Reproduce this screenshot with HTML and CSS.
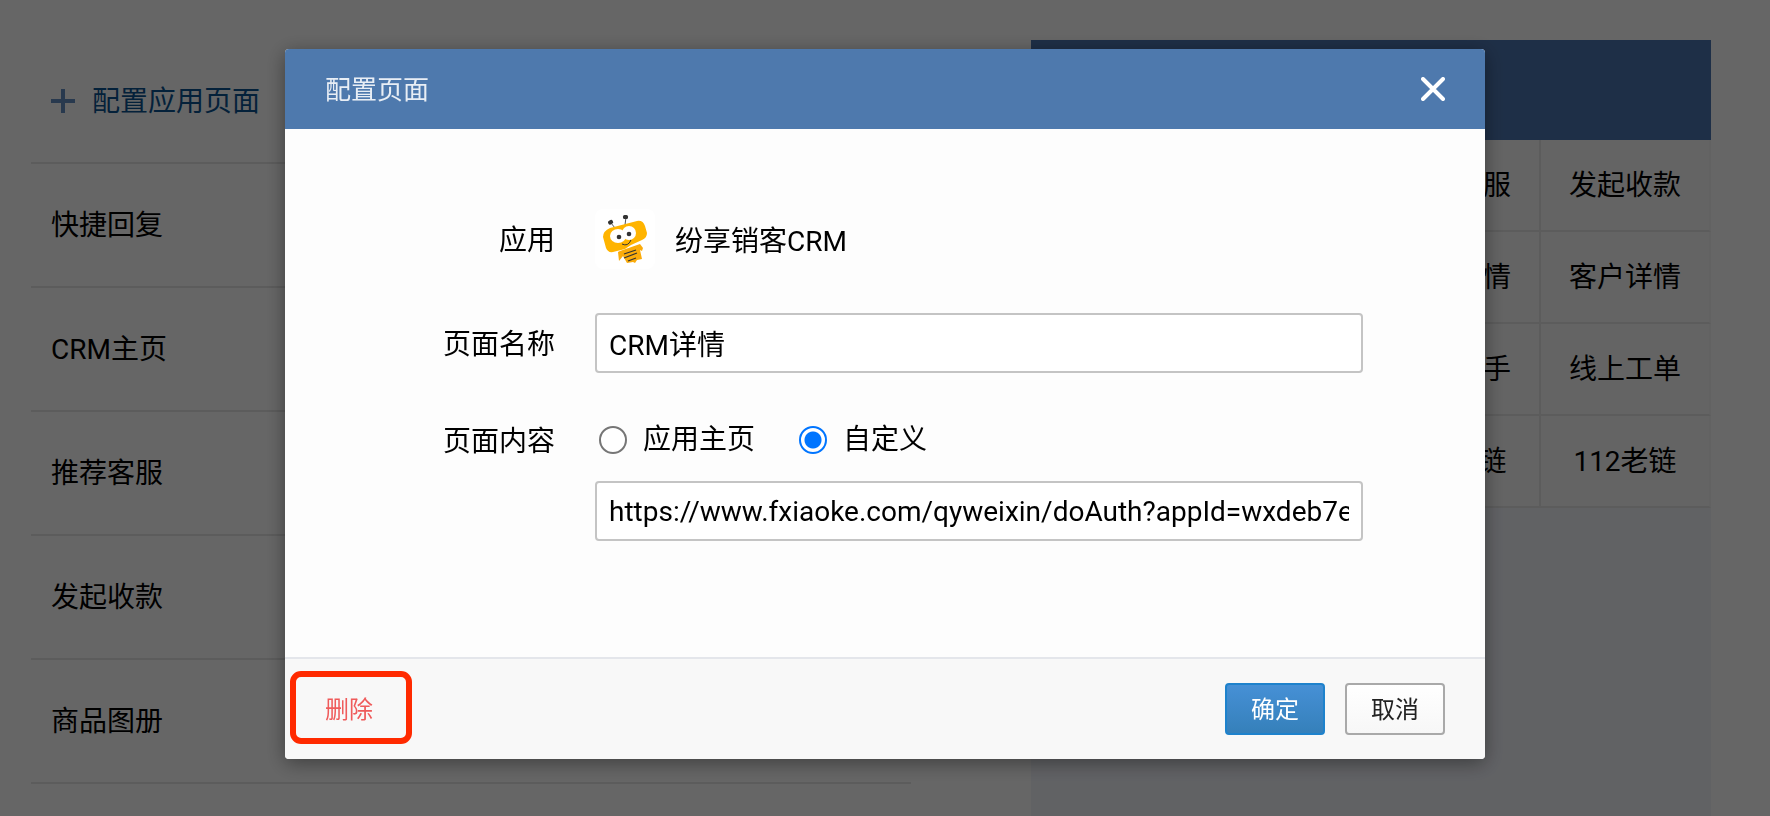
FILE: index.html
```html
<!DOCTYPE html>
<html lang="zh-CN">
<head>
  <meta charset="UTF-8" />
  <meta name="viewport" content="width=device-width, initial-scale=1.0" />
  <title>配置页面</title>
  <link rel="stylesheet" href="styles.css">
</head>
<body>

  <div class="page">
    <ul class="page-list">
      <li>
        <a href="#" class="add-link">
          <svg class="plus" viewBox="0 0 24 24"><path d="M12 0v24M0 12h24" stroke="currentColor" stroke-width="4" /></svg>
          <span>配置应用页面</span>
        </a>
      </li>
      <li><a href="#"><span>快捷回复</span></a></li>
      <li><a href="#"><span>CRM主页</span></a></li>
      <li><a href="#"><span>推荐客服</span></a></li>
      <li><a href="#"><span>发起收款</span></a></li>
      <li><a href="#"><span>商品图册</span></a></li>
    </ul>

    <div class="preview">
      <div class="preview-header"></div>
      <!-- 4 x 4 shortcuts -->
      <div class="preview-grid">
        <div class="cell"></div>
        <div class="cell"></div>
        <div class="cell">推荐客服</div>
        <div class="cell">发起收款</div>
        <div class="cell"></div>
        <div class="cell"></div>
        <div class="cell">商品详情</div>
        <div class="cell">客户详情</div>
        <div class="cell"></div>
        <div class="cell"></div>
        <div class="cell">销售助手</div>
        <div class="cell">线上工单</div>
        <div class="cell"></div>
        <div class="cell"></div>
        <div class="cell">112新链</div>
        <div class="cell">112老链</div>
      </div>
    </div>
  </div>

  <div class="overlay">
    <form class="dialog" role="dialog" aria-labelledby="dialog-title">
      <div class="dialog-header">
        <h1 id="dialog-title">配置页面</h1>
        <button type="button" class="close" aria-label="关闭">
          <svg viewBox="0 0 24 24"><path d="M2 2l20 20M22 2L2 22" stroke="#fff" stroke-width="4" stroke-linecap="round" /></svg>
        </button>
      </div>

      <div class="dialog-body">
        <span class="label">应用</span>
        <div class="app">
          <svg class="app-icon" viewBox="0 0 60 60">
            <rect width="60" height="60" rx="8" fill="#fff" />
            <!-- antennae -->
            <path d="M16 14l4 5M31 8l-1 8" stroke="#555" stroke-width="1" />
            <rect x="13" y="11" width="5" height="4" rx="1.5" transform="rotate(-30 16 13)" fill="#333" />
            <rect x="28" y="6" width="5" height="4" rx="1.5" fill="#333" />
            <!-- body and wings -->
            <path d="M25 42l20-7 3 4-1 3-2-1 2 9-5 1-2 3-2-1-6 1-4-7-4 5-1-9z" fill="#fbac0b" />
            <path d="M29 45l12-4M29 49l13-5M33 52l8-3" stroke="#333" stroke-width="1.2" />
            <!-- head -->
            <path d="M15 19l27-7q6-1 8 5l2 7q0 5-5 7l-11 5-6 4-12 3q-5 1-7-4l-3-11q0-6 7-9z" fill="#ffb400" />
            <ellipse cx="23" cy="27" rx="8" ry="7" fill="#fff" />
            <ellipse cx="34" cy="24" rx="7" ry="7" fill="#fff" />
            <circle cx="24" cy="28" r="2.3" fill="#333" />
            <circle cx="34" cy="25" r="2.3" fill="#333" />
            <path d="M27 35q6 3 9-4" stroke="#333" stroke-width="1" fill="none" />
          </svg>
          <span>纷享销客CRM</span>
        </div>

        <label class="label" for="page-name">页面名称</label>
        <input type="text" class="text-input" id="page-name" value="CRM详情">

        <span class="label label-content" id="content-label">页面内容</span>
        <div class="content-field" role="radiogroup" aria-labelledby="content-label">
          <div class="radios">
            <label><input type="radio" name="content" value="home">应用主页</label>
            <label><input type="radio" name="content" value="custom" checked>自定义</label>
          </div>
          <input type="text" class="text-input" aria-label="页面地址" value="https://www.fxiaoke.com/qyweixin/doAuth?appId=wxdeb7e2c">
        </div>
      </div>

      <div class="dialog-footer">
        <button type="button" class="delete">删除</button>
        <button type="submit" class="btn btn-primary">确定</button>
        <button type="button" class="btn">取消</button>
      </div>
    </form>
  </div>

</body>
</html>
```

FILE: styles.css
```css
* {
  box-sizing: border-box;
}

body {
  margin: 0;
  overflow: hidden;
  font-family: Roboto, "Noto Sans CJK SC", sans-serif;
  font-size: 28px;
  line-height: 40px;
  color: #000;
  background-color: #fff;
}

button,
input {
  font-family: inherit;
  font-size: inherit;
  color: inherit;
}

/* page behind the dialog */
.page {
  display: flex;
  gap: 120px;
  height: 100vh;
  padding: 40px 59px 0 31px;
}

.page-list {
  flex: 1;
  margin: 0;
  padding: 0;
  list-style: none;
}

.page-list a {
  display: flex;
  align-items: center;
  height: 124px;
  padding: 0 20px;
  border-bottom: 2px solid #e6e6e6;
  color: #000;
  text-decoration: none;
}

.page-list span {
  padding-top: 2px;
}

.page-list .add-link {
  gap: 17px;
  color: #0a5391;
}

.plus {
  width: 24px;
  height: 24px;
  color: #6490c4;
}

.preview {
  width: 680px;
  background-color: #f3f5fb;
}

.preview-header {
  height: 100px;
  background-color: #4d76b1;
}

.preview-grid {
  display: grid;
  grid-template-columns: repeat(4, 1fr);
  background-color: #f9f9f9;
}

.cell {
  display: flex;
  align-items: center;
  justify-content: center;
  height: 92px;
  padding-top: 2px;
  border-right: 2px solid #e6e6e6;
  border-bottom: 2px solid #e6e6e6;
}

.cell:nth-child(4n) {
  border-right-color: #f6f6f6;
}

/* dialog */
.overlay {
  position: fixed;
  inset: 0;
  display: flex;
  align-items: flex-start;
  justify-content: center;
  padding-top: 49px;
  background-color: rgba(0, 0, 0, 0.6);
}

.dialog {
  width: 1200px;
  max-width: 100%;
  border-radius: 4px;
  overflow: hidden;
  background-color: #fdfdfd;
  box-shadow: 0 4px 20px rgba(0, 0, 0, 0.4);
}

.dialog-header {
  display: flex;
  align-items: center;
  justify-content: space-between;
  height: 80px;
  padding: 0 40px;
  background-color: #4e79ad;
}

.dialog-header h1 {
  margin: 0;
  padding-top: 2px;
  font-size: 26px;
  font-weight: normal;
  color: #e8eef5;
}

.close {
  display: flex;
  padding: 0;
  border: none;
  background: none;
  cursor: pointer;
}

.close svg {
  width: 24px;
  height: 24px;
}

.dialog-body {
  display: grid;
  grid-template-columns: 270px 1fr;
  column-gap: 40px;
  row-gap: 44px;
  padding: 80px 122px 116px 0;
}

.label {
  height: 60px;
  line-height: 64px;
  text-align: right;
}

.label-content {
  line-height: 50px;
}

.app {
  display: flex;
  gap: 20px;
  height: 60px;
  line-height: 66px;
}

.app-icon {
  width: 60px;
  height: 60px;
}

.text-input {
  display: block;
  width: 100%;
  height: 60px;
  padding: 0 12px;
  border: 2px solid #c4c4c4;
  border-radius: 4px;
  background-color: #fff;
}

.radios {
  display: flex;
  gap: 44px;
  height: 46px;
  margin-bottom: 18px;
  padding-left: 4px;
}

.radios label {
  display: flex;
  align-items: center;
  gap: 16px;
}

.radios input {
  appearance: none;
  width: 28px;
  height: 28px;
  margin: 0;
  border: 2px solid #767676;
  border-radius: 50%;
  background-color: #fff;
}

.radios input:checked {
  border-color: #0075ff;
  background: radial-gradient(circle, #0075ff 8px, #fff 9px);
}

.dialog-footer {
  display: flex;
  align-items: center;
  gap: 20px;
  padding: 24px 40px;
  border-top: 2px solid #e4e6eb;
  background-color: #f8f8f8;
  font-size: 24px;
}

.delete {
  position: relative;
  height: 52px;
  margin-right: auto;
  padding: 0 0 4px;
  border: none;
  background: none;
  color: #ef5b5b;
  cursor: pointer;
}

/* red frame round the delete button */
.delete::after {
  content: "";
  position: absolute;
  inset: -12px -39px -9px -35px;
  border: 6px solid #ff2a00;
  border-radius: 11px;
}

.btn {
  width: 100px;
  height: 52px;
  padding: 0 0 3px;
  border: 2px solid #a9a9a9;
  border-radius: 4px;
  background: linear-gradient(#fff, #f7f7f7);
  color: #222;
  cursor: pointer;
}

.btn-primary {
  border-color: #1e82cc;
  background: linear-gradient(#4690d6, #3580ba);
  color: #fff;
}
```
